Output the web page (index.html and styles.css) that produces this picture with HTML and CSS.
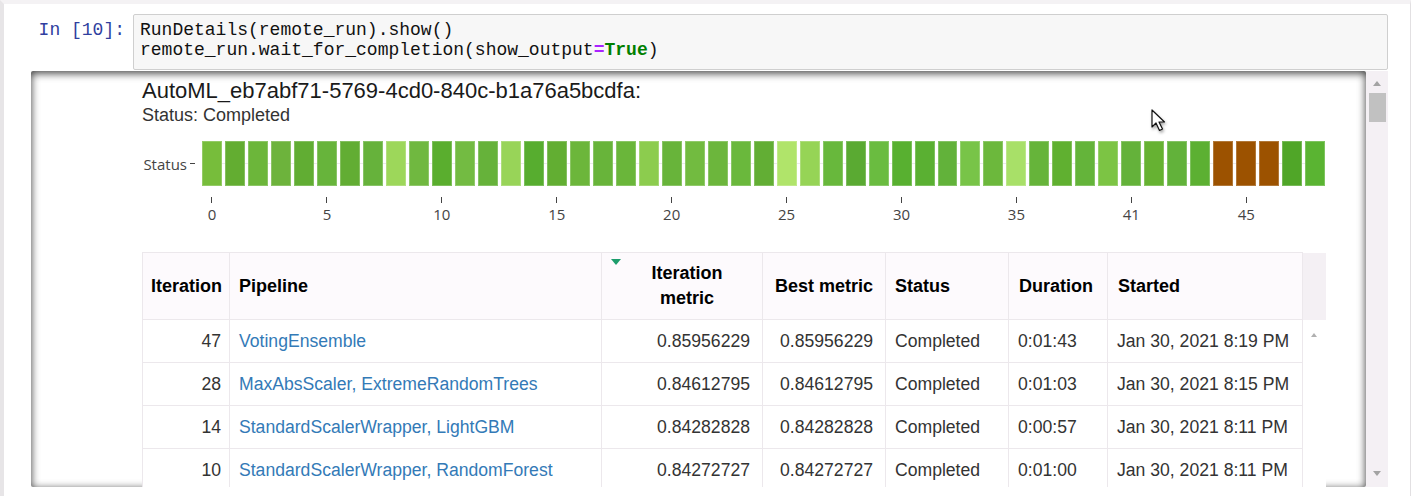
FILE: index.html
```html
<!DOCTYPE html>
<html>
<head>
<meta charset="utf-8">
<link rel="stylesheet" href="styles.css">
</head>
<body>
<div class="frame">
  <div class="cell">
    <div class="input">
      <div class="prompt">In&nbsp;[10]:</div>
      <div class="code">
        <div class="line">RunDetails(remote_run).show()</div>
        <div class="line">remote_run.wait_for_completion(show_output<span class="op">=</span><span class="kw">True</span>)</div>
      </div>
    </div>
    <div class="output">
      <div class="out-main">
        <div class="widget">
          <div class="title">AutoML_eb7abf71-5769-4cd0-840c-b1a76a5bcdfa:</div>
          <div class="status">Status: Completed</div>
          <div class="chart">
            <div class="ylabel">Status<span class="ytick"></span></div>
            <div class="plot">
              <div class="bars">
                <span class="bar" style="background:#77bd3b"></span>
                <span class="bar" style="background:#63ad31"></span>
                <span class="bar" style="background:#6cb63a"></span>
                <span class="bar" style="background:#6db33c"></span>
                <span class="bar" style="background:#61ad33"></span>
                <span class="bar" style="background:#67b43b"></span>
                <span class="bar" style="background:#62ad33"></span>
                <span class="bar" style="background:#66b23b"></span>
                <span class="bar" style="background:#9dd75a"></span>
                <span class="bar" style="background:#70b840"></span>
                <span class="bar" style="background:#5aae2e"></span>
                <span class="bar" style="background:#73bb42"></span>
                <span class="bar" style="background:#66b23a"></span>
                <span class="bar" style="background:#98d458"></span>
                <span class="bar" style="background:#57ad2f"></span>
                <span class="bar" style="background:#62ae32"></span>
                <span class="bar" style="background:#6cb63b"></span>
                <span class="bar" style="background:#68b43a"></span>
                <span class="bar" style="background:#6ab63a"></span>
                <span class="bar" style="background:#8ccc4e"></span>
                <span class="bar" style="background:#68b43a"></span>
                <span class="bar" style="background:#72bb40"></span>
                <span class="bar" style="background:#6cb63c"></span>
                <span class="bar" style="background:#6ab83c"></span>
                <span class="bar" style="background:#62ae34"></span>
                <span class="bar" style="background:#b0e46a"></span>
                <span class="bar" style="background:#96d456"></span>
                <span class="bar" style="background:#68b83c"></span>
                <span class="bar" style="background:#5aaa32"></span>
                <span class="bar" style="background:#6abc40"></span>
                <span class="bar" style="background:#58b030"></span>
                <span class="bar" style="background:#5ab032"></span>
                <span class="bar" style="background:#62b23a"></span>
                <span class="bar" style="background:#78c448"></span>
                <span class="bar" style="background:#6cb83c"></span>
                <span class="bar" style="background:#a8e068"></span>
                <span class="bar" style="background:#66b43a"></span>
                <span class="bar" style="background:#60b030"></span>
                <span class="bar" style="background:#64b43a"></span>
                <span class="bar" style="background:#7cc444"></span>
                <span class="bar" style="background:#64b23a"></span>
                <span class="bar" style="background:#66b232"></span>
                <span class="bar" style="background:#62b23a"></span>
                <span class="bar" style="background:#5cb032"></span>
                <span class="bar" style="background:#9c5200"></span>
                <span class="bar" style="background:#9c5200"></span>
                <span class="bar" style="background:#9c5200"></span>
                <span class="bar" style="background:#50a628"></span>
                <span class="bar" style="background:#5ab432"></span>
              </div>
              <div class="xaxis">
                <span class="slot"><i class="tick"></i><b>0</b></span>
                <span class="slot"></span><span class="slot"></span><span class="slot"></span><span class="slot"></span>
                <span class="slot"><i class="tick"></i><b>5</b></span>
                <span class="slot"></span><span class="slot"></span><span class="slot"></span><span class="slot"></span>
                <span class="slot"><i class="tick"></i><b>10</b></span>
                <span class="slot"></span><span class="slot"></span><span class="slot"></span><span class="slot"></span>
                <span class="slot"><i class="tick"></i><b>15</b></span>
                <span class="slot"></span><span class="slot"></span><span class="slot"></span><span class="slot"></span>
                <span class="slot"><i class="tick"></i><b>20</b></span>
                <span class="slot"></span><span class="slot"></span><span class="slot"></span><span class="slot"></span>
                <span class="slot"><i class="tick"></i><b>25</b></span>
                <span class="slot"></span><span class="slot"></span><span class="slot"></span><span class="slot"></span>
                <span class="slot"><i class="tick"></i><b>30</b></span>
                <span class="slot"></span><span class="slot"></span><span class="slot"></span><span class="slot"></span>
                <span class="slot"><i class="tick"></i><b>35</b></span>
                <span class="slot"></span><span class="slot"></span><span class="slot"></span><span class="slot"></span>
                <span class="slot"><i class="tick"></i><b>41</b></span>
                <span class="slot"></span><span class="slot"></span><span class="slot"></span><span class="slot"></span>
                <span class="slot"><i class="tick"></i><b>45</b></span>
                <span class="slot"></span><span class="slot"></span><span class="slot"></span>
              </div>
            </div>
          </div>
          <table class="runs">
            <colgroup>
              <col class="c-iter"><col class="c-pipe"><col class="c-imet"><col class="c-best"><col class="c-stat"><col class="c-dur"><col class="c-start"><col class="c-scroll">
            </colgroup>
            <thead>
              <tr>
                <th class="h-iter">Iteration</th>
                <th>Pipeline</th>
                <th class="h-center h-sorted"><span class="sort"></span>Iteration<br>metric</th>
                <th class="h-center">Best metric</th>
                <th>Status</th>
                <th class="h-dur">Duration</th>
                <th class="h-dur">Started</th>
                <th class="h-scroll"></th>
              </tr>
            </thead>
            <tbody>
              <tr>
                <td class="num iter">47</td>
                <td><a>VotingEnsemble</a></td>
                <td class="num">0.85956229</td>
                <td class="num">0.85956229</td>
                <td>Completed</td>
                <td>0:01:43</td>
                <td>Jan 30, 2021 8:19 PM</td>
                <td class="s-col"><span class="mini-up"></span></td>
              </tr>
              <tr>
                <td class="num iter">28</td>
                <td><a>MaxAbsScaler, ExtremeRandomTrees</a></td>
                <td class="num">0.84612795</td>
                <td class="num">0.84612795</td>
                <td>Completed</td>
                <td>0:01:03</td>
                <td>Jan 30, 2021 8:15 PM</td>
                <td class="s-col"></td>
              </tr>
              <tr>
                <td class="num iter">14</td>
                <td><a>StandardScalerWrapper, LightGBM</a></td>
                <td class="num">0.84282828</td>
                <td class="num">0.84282828</td>
                <td>Completed</td>
                <td>0:00:57</td>
                <td>Jan 30, 2021 8:11 PM</td>
                <td class="s-col"></td>
              </tr>
              <tr>
                <td class="num iter">10</td>
                <td><a>StandardScalerWrapper, RandomForest</a></td>
                <td class="num">0.84272727</td>
                <td class="num">0.84272727</td>
                <td>Completed</td>
                <td>0:01:00</td>
                <td>Jan 30, 2021 8:11 PM</td>
                <td class="s-col"></td>
              </tr>
            </tbody>
          </table>
        </div>
      </div>
      <div class="vscroll">
        <span class="arr-up"></span>
        <span class="thumb"></span>
        <span class="track"></span>
        <span class="arr-down"></span>
      </div>
    </div>
  </div>
  <svg class="cursor" width="18" height="26" viewBox="0 0 18 26">
    <path d="M2 2 L2 19 L6 15 L9.5 22.5 L12.5 21 L9 14 L14.5 14 Z" fill="#fff" stroke="#111" stroke-width="1.2" stroke-linejoin="round"/>
  </svg>
</div>
</body>
</html>
```

FILE: styles.css
```css
html, body {
  margin: 0;
  padding: 0;
  background: #fff;
}

.frame {
  position: relative;
  box-sizing: border-box;
  width: 1411px;
  height: 496px;
  border-left: 4px solid #e7e5e7;
  border-top: 4px solid #f4f2f4;
  border-right: 1px solid #e2e0e2;
  overflow: hidden;
}

.cell {
  padding: 10px 22px 0 0;
}

.input {
  display: flex;
}

.prompt {
  width: 129px;
  flex: none;
  box-sizing: border-box;
  padding: 6px 8px 0 0;
  text-align: right;
  font-family: "Liberation Mono", monospace;
  font-size: 18px;
  line-height: 20px;
  color: #303f9f;
}

.code {
  flex: 1;
  background: #f7f7f7;
  border: 1px solid #cfcfcf;
  border-radius: 2px;
  padding: 5px 6px 9px;
  font-family: "Liberation Mono", monospace;
  font-size: 18px;
  line-height: 20px;
  color: #111;
}

.code .line {
  white-space: pre;
}

.code .op {
  color: #aa22ff;
  font-weight: bold;
}

.code .kw {
  color: #008000;
  font-weight: bold;
}

.output {
  display: flex;
  margin: 1px 0 0 27px;
  height: 416px;
}

.out-main {
  flex: 1;
  min-width: 0;
  overflow: hidden;
  box-shadow: inset 0 2px 8px rgba(0, 0, 0, 0.8);
  border-radius: 2px;
  padding: 8px 0 0 111px;
}

.widget {
  width: 1183px;
  font-family: "Liberation Sans", Arial, sans-serif;
}

.title {
  font-size: 22px;
  line-height: 24px;
  color: #1a1a1a;
}

.status {
  margin-top: 2px;
  font-size: 18px;
  line-height: 20px;
  color: #333;
}

.chart {
  display: flex;
  margin-top: 16px;
}

.ylabel {
  width: 62px;
  height: 45px;
  flex: none;
  display: flex;
  align-items: center;
  justify-content: flex-end;
  font-family: "Open Sans", sans-serif;
  font-size: 15px;
  color: #444;
  margin-left: -2px;
}

.ytick {
  display: inline-block;
  width: 5px;
  height: 1px;
  background: #444;
  margin: 0 7px 0 3px;
}

.plot {
  flex: 1;
}

.bars {
  display: flex;
  gap: 3px;
  height: 45px;
  background: linear-gradient(to bottom, transparent 22px, #ebebeb 22px, #ebebeb 23px, transparent 23px);
}

.bar {
  flex: 1;
  box-shadow: inset 0 0 0 1px rgba(255, 255, 255, 0.22);
}

.xaxis {
  display: flex;
  gap: 3px;
  margin-top: 11px;
}

.slot {
  flex: 1;
  min-width: 0;
  display: flex;
  flex-direction: column;
  align-items: center;
}

.tick {
  display: block;
  width: 1px;
  height: 6px;
  background: #444;
}

.slot b {
  font-weight: normal;
  font-family: "Open Sans", sans-serif;
  font-size: 15px;
  line-height: 18px;
  margin-top: 2px;
  color: #444;
  white-space: nowrap;
}

.runs {
  margin-top: 29px;
  width: 1183px;
  table-layout: fixed;
  border-collapse: collapse;
  font-size: 17.6px;
  color: #333;
}

.c-iter { width: 87px; }
.c-pipe { width: 372px; }
.c-imet { width: 161px; }
.c-best { width: 123px; }
.c-stat { width: 123px; }
.c-dur { width: 99px; }
.c-start { width: 195px; }
.c-scroll { width: 23px; }

.runs th {
  height: 66px;
  padding: 0 9px;
  background: #fdfafd;
  border: 1px solid #ece8ec;
  text-align: left;
  vertical-align: middle;
  font-size: 18px;
  line-height: 25px;
  font-weight: bold;
  color: #000;
  white-space: nowrap;
}

.runs th.h-iter {
  padding-left: 8px;
}

.runs th.h-dur {
  padding-left: 10px;
}

.runs th.h-center {
  text-align: center;
  padding: 0 4px;
}

.runs th.h-sorted {
  position: relative;
  padding-left: 14px;
}

.sort {
  position: absolute;
  left: 9px;
  top: 6px;
  width: 0;
  height: 0;
  border-left: 5px solid transparent;
  border-right: 5px solid transparent;
  border-top: 6px solid #1d9d6c;
}

.runs th.h-scroll {
  background: #f4f0f4;
  border: 0;
  padding: 0;
}

.runs td {
  height: 42px;
  padding: 0 9px;
  border: 1px solid #ece8ec;
  background: #fff;
  vertical-align: middle;
  line-height: 22px;
  white-space: nowrap;
}

.runs td.num {
  text-align: right;
  padding-right: 12px;
}

.runs td.iter {
  padding-right: 8px;
}

.runs td a {
  color: #337ab7;
  text-decoration: none;
}

.runs td.s-col {
  border: 0;
  padding: 0;
  vertical-align: top;
  text-align: center;
}

.mini-up {
  display: inline-block;
  margin-top: 10px;
  width: 0;
  height: 0;
  border-left: 3.5px solid transparent;
  border-right: 3.5px solid transparent;
  border-bottom: 4px solid #b0b0b0;
}

.vscroll {
  width: 22px;
  flex: none;
  background: #f4f0f4;
  display: flex;
  flex-direction: column;
  align-items: center;
}

.arr-up {
  margin-top: 10px;
  width: 0;
  height: 0;
  border-left: 4px solid transparent;
  border-right: 4px solid transparent;
  border-bottom: 5px solid #a3a3a3;
}

.thumb {
  margin-top: 7px;
  width: 17px;
  height: 29px;
  background: #c1c1c1;
}

.track {
  flex: 1;
}

.arr-down {
  margin-bottom: 11px;
  width: 0;
  height: 0;
  border-left: 4px solid transparent;
  border-right: 4px solid transparent;
  border-top: 5px solid #a3a3a3;
}

.cursor {
  position: absolute;
  left: 1146px;
  top: 104px;
  filter: drop-shadow(1px 2px 1.5px rgba(0, 0, 0, 0.35));
}
```
